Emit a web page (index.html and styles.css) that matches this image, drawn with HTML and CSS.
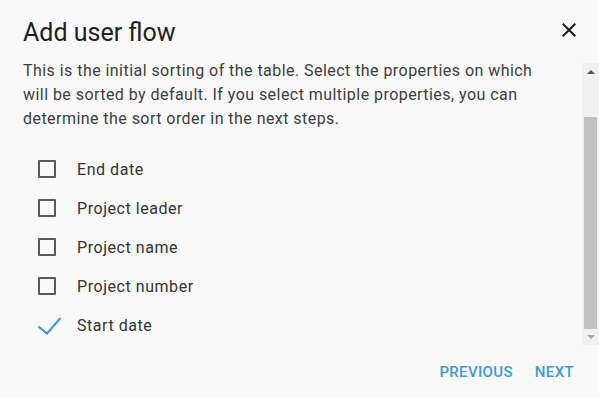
FILE: index.html
```html
<!DOCTYPE html>
<html lang="en">
<head>
<meta charset="utf-8">
<title>Add user flow</title>
<link rel="stylesheet" href="styles.css">
</head>
<body>
<div class="dialog">
  <header class="head">
    <h1 class="title">Add user flow</h1>
    <button class="close" aria-label="Close">
      <svg viewBox="0 0 24 24" width="24" height="24"><path d="M19 6.41L17.59 5 12 10.59 6.41 5 5 6.41 10.59 12 5 17.59 6.41 19 12 13.41 17.59 19 19 17.59 13.41 12z"/></svg>
    </button>
  </header>
  <div class="body">
    <div class="content">
      <p class="desc">This is the initial sorting of the table. Select the properties on which will be sorted by default. If you select multiple properties, you can determine the sort order in the next steps.</p>
      <ul class="options">
        <li class="option"><span class="box"></span><span class="label">End date</span></li>
        <li class="option"><span class="box"></span><span class="label">Project leader</span></li>
        <li class="option"><span class="box"></span><span class="label">Project name</span></li>
        <li class="option"><span class="box"></span><span class="label">Project number</span></li>
        <li class="option checked"><svg class="tick" viewBox="0 0 24 24" width="24" height="24"><polyline points="0.5,12.5 9,19.5 22.5,4"/></svg><span class="label">Start date</span></li>
      </ul>
    </div>
    <div class="scrollbar">
      <span class="arrow up"></span>
      <span class="track"><span class="thumb"></span></span>
      <span class="arrow down"></span>
    </div>
  </div>
  <footer class="actions">
    <button class="action">Previous</button>
    <button class="action">Next</button>
  </footer>
</div>
</body>
</html>
```

FILE: styles.css
```css
html, body {
  margin: 0;
  padding: 0;
}
body {
  background: #f9f9f9;
  font-family: Roboto, "Liberation Sans", sans-serif;
  color: #333;
}
.dialog {
  width: 599px;
  height: 398px;
  display: flex;
  flex-direction: column;
}
.head {
  display: flex;
  justify-content: space-between;
  align-items: flex-start;
  padding: 17px 18px 10px 23px;
}
.title {
  margin: 0;
  font-size: 25px;
  line-height: 32px;
  font-weight: 400;
  color: #212121;
}
.close {
  border: 0;
  background: none;
  padding: 0;
  margin-top: 1px;
  width: 24px;
  height: 24px;
  cursor: pointer;
}
.close svg {
  display: block;
  fill: #1a1a1a;
}
.body {
  display: flex;
  height: 286px;
}
.content {
  flex: 1;
  padding: 0 23px;
  overflow: hidden;
}
.desc {
  margin: 0;
  font-size: 16px;
  line-height: 24px;
  letter-spacing: 0.45px;
  color: #3d3d3d;
}
.options {
  list-style: none;
  margin: 19px 0 0;
  padding: 0 0 0 15px;
}
.option {
  display: flex;
  align-items: center;
  height: 39px;
}
.box {
  box-sizing: border-box;
  width: 18px;
  height: 18px;
  border: 2px solid #5a5a5a;
  border-radius: 1px;
  margin-right: 21px;
  margin-top: -1px;
}
.tick {
  display: block;
  margin-right: 15px;
  fill: none;
  stroke: #3a9dcd;
  stroke-width: 2;
}
.label {
  font-size: 16px;
  letter-spacing: 0.55px;
  color: #333;
}
.scrollbar {
  width: 17px;
  margin-top: 4px;
  background: #f1f1f1;
  display: flex;
  flex-direction: column;
}
.arrow {
  height: 17px;
  display: flex;
  align-items: center;
  justify-content: center;
}
.arrow::before {
  content: "";
  width: 0;
  height: 0;
  border-left: 4px solid transparent;
  border-right: 4px solid transparent;
}
.arrow.up::before {
  border-bottom: 4px solid #505050;
}
.arrow.down {
  height: 16px;
}
.arrow.down::before {
  border-top: 4px solid #a3a3a3;
}
.track {
  flex: 1;
  display: flex;
  flex-direction: column;
  padding: 37px 2px 0;
}
.thumb {
  flex: 1;
  background: #c1c1c1;
}
.actions {
  flex: 1;
  display: flex;
  justify-content: flex-end;
  align-items: center;
  gap: 22px;
  padding: 0 25px 0 0;
}
.action {
  border: 0;
  background: none;
  padding: 0;
  font-family: Roboto, "Liberation Sans", sans-serif;
  font-size: 15px;
  font-weight: 500;
  letter-spacing: 0.35px;
  text-transform: uppercase;
  color: #3a9dcd;
  cursor: pointer;
}
```
